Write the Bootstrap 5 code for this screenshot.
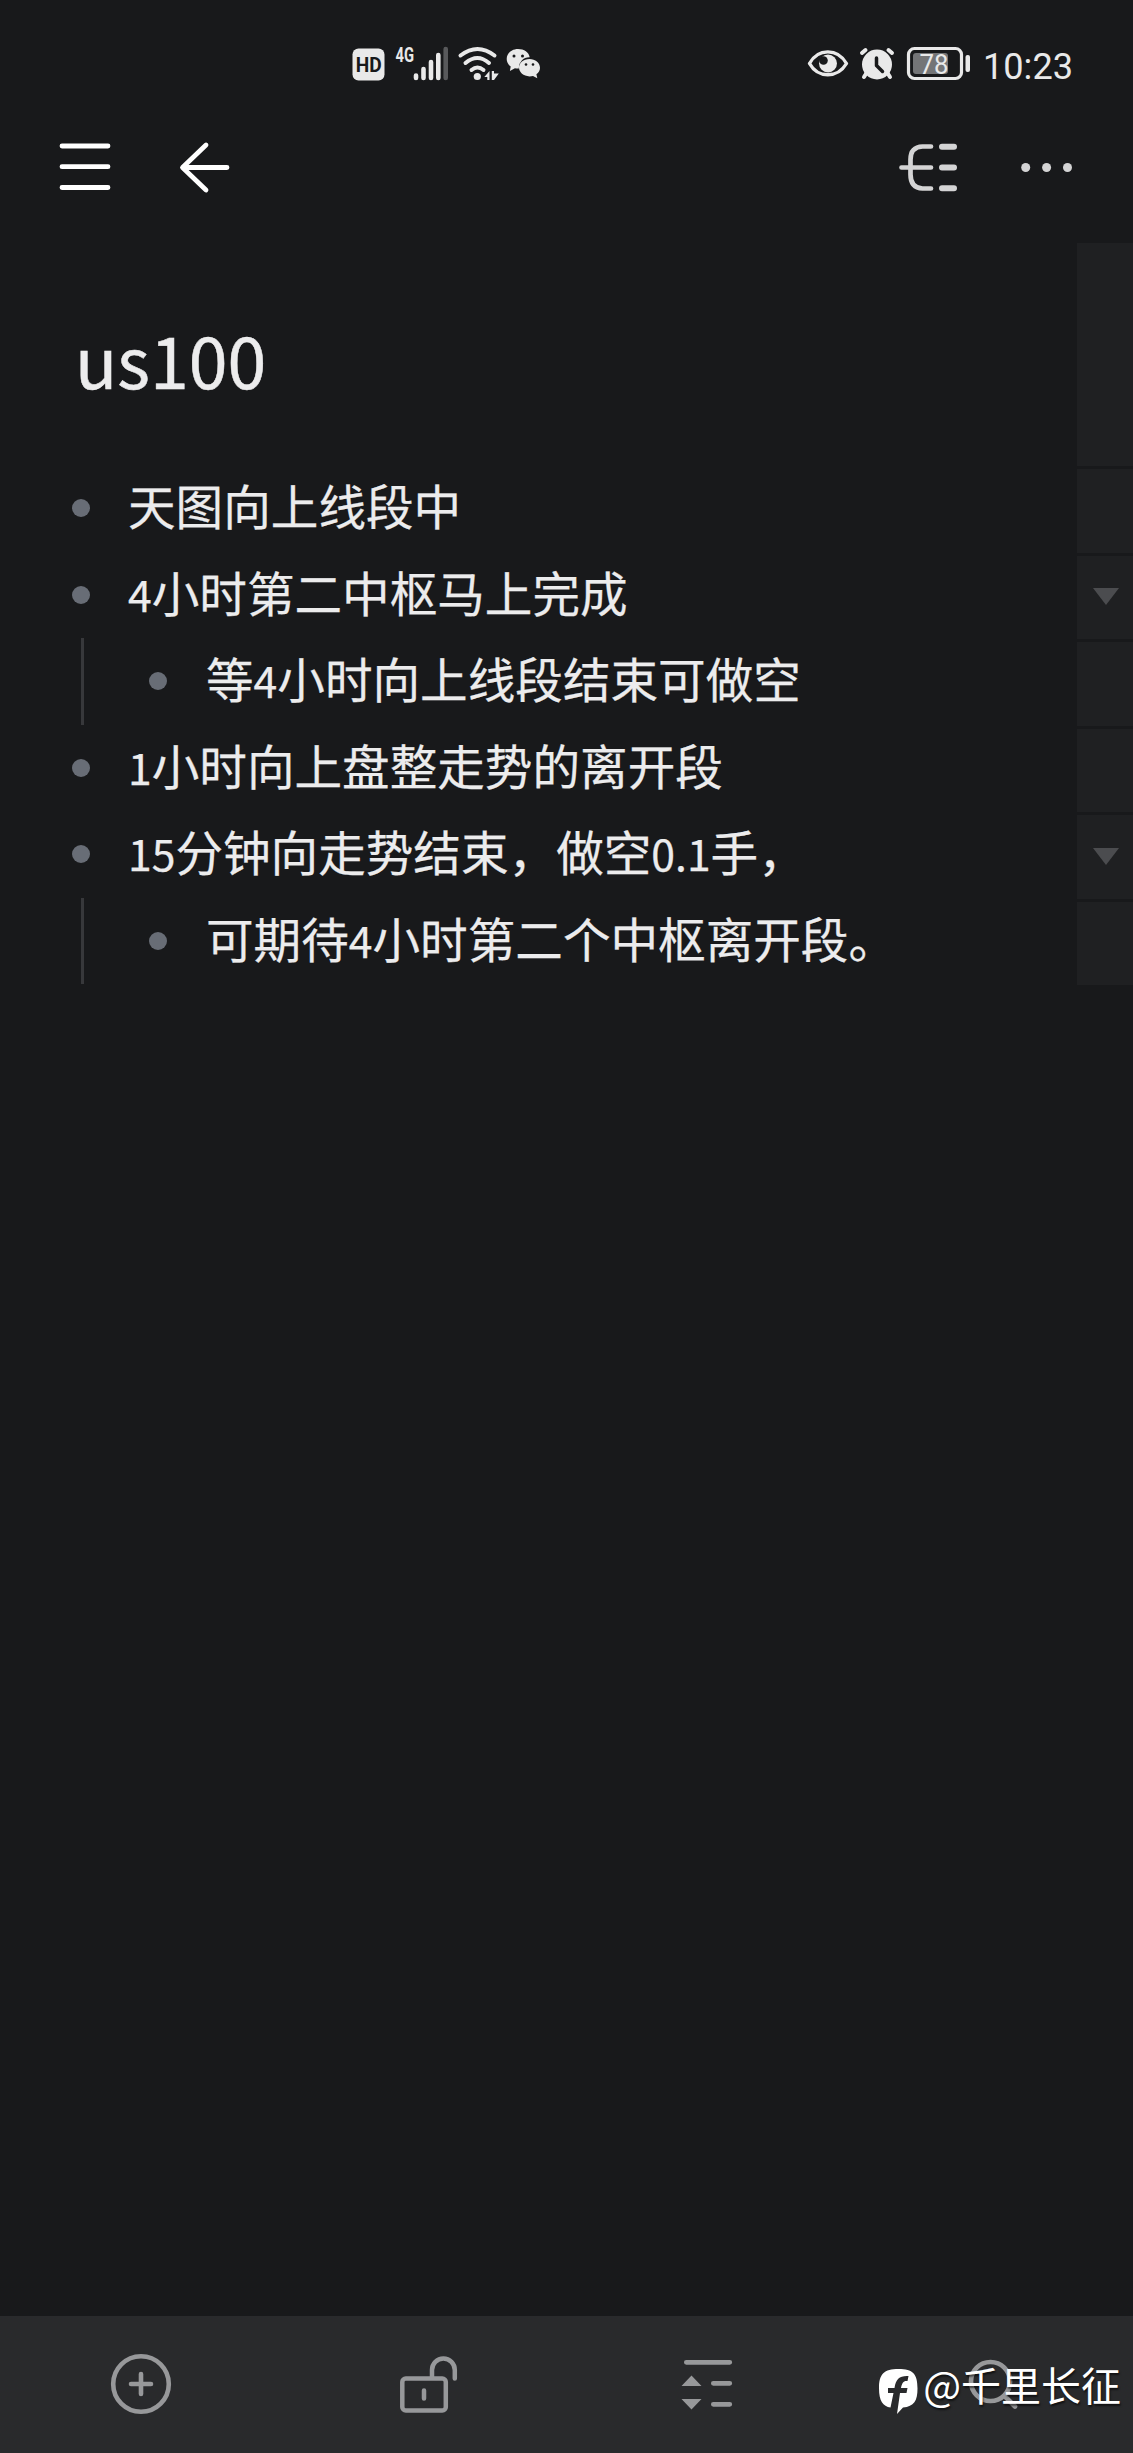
<!DOCTYPE html>
<html lang="zh-CN">
<head>
<meta charset="utf-8">
<meta name="viewport" content="width=device-width, initial-scale=1">
<title>us100</title>
<link href="https://cdn.jsdelivr.net/npm/bootstrap@5.3.0/dist/css/bootstrap.min.css" rel="stylesheet">
<style>
body{background:#18191b;color:#ececed;font-family:"Noto Sans CJK SC","Noto Sans",sans-serif;height:2453px;overflow:hidden}
svg{display:block;flex:none}
.statusbar{height:105px}
.st-left{padding-left:340px;padding-top:30px}
.st-right{padding-left:230px;padding-top:30px}
.topbar{height:138px}
.topbar>svg:first-child{margin-left:40px}
.topbar>svg:last-child{margin-left:610px}
.doc-col{width:1077px}
.doc-title{font-size:69.8px;line-height:100px;font-weight:400;margin:0;padding:66px 0 0 75px;height:222px;-webkit-text-stroke:.5px #ececed}
.outline-row{height:86.5px;font-size:47.6px;line-height:79px;padding-left:71.5px;white-space:nowrap}
.outline-row>span{height:86.5px;-webkit-text-stroke:.25px #ececed}
.outline-row.sub{padding-left:80.5px}
.guide{width:3px;align-self:stretch;background:#37383b;margin-right:65.5px}
.dot{width:18px;height:18px;border-radius:50%;background:#686d76;margin-right:38.5px;flex:none}
.sub .dot{margin-right:39px}
.num{font-size:42.7px}
.side{width:56px}
.side-cell{height:83.5px;margin-bottom:3px;background:#1f2022}
.side-cell svg{margin-left:2px}
.side-cell.tall{height:223px}
.toolbar-bottom{height:137px;background:#292a2c}
.wmark{right:12px;bottom:38px;color:#fff;font-size:40px;line-height:60px;text-shadow:1px 2px 2px #0009}
.wmark svg{margin-top:15px}
</style>
<script src="https://cdn.jsdelivr.net/npm/bootstrap@5.3.0/dist/js/bootstrap.bundle.min.js"></script>
</head>
<body class="d-flex flex-column position-relative">
<header>
<div class="statusbar d-flex">
<div class="st-left">
<svg width="220" height="70" viewBox="0 0 220 70" fill="#e9e9e9">
<rect x="12.500" y="18.500" width="32" height="32" rx="6"/>
<text x="28.700" y="41.500" text-anchor="middle" font-family="Roboto" font-weight="700" font-size="19.500" textLength="26" lengthAdjust="spacingAndGlyphs" fill="#18191b">HD</text>
<text x="55.500" y="31.500" font-family="Roboto" font-weight="700" font-size="20.500" textLength="18.500" lengthAdjust="spacingAndGlyphs">4G</text>
<g stroke="#e9e9e9" stroke-width="4.600" stroke-linecap="round"><path d="M76 45.500v2.500M83.500 39v9M91 32v16M98.300 25v23"/><path stroke="#58595b" d="M105.700 19v29"/></g>
<g fill="none" stroke="#e9e9e9" stroke-width="4" stroke-linecap="round"><path d="M120.500 25.500Q137.500 12.500 154.500 25.500M125.500 33Q137.500 23 149 33M131.500 40Q137.500 35 143.500 40"/></g>
<circle cx="137.300" cy="46.500" r="3.600"/><path d="M149.500 41v9h-2.200v-3h-3zM151.800 41h2.200v2.500h4.800l-4.800 6.500h-2.200z"/>
<path d="M178 19c-6.500 0-11.300 4.500-11.300 10 0 3 1.500 5.800 4 7.500l-.8 4.500 5-2.700q2 .4 4 .3a10.500 10.500 0 0 1 10.800-11.400c-.8-5-5.500-8.200-11.700-8.200z"/>
<path d="M189.500 29c-6 0-10.500 4-10.500 8.600s4.500 8.800 10.500 8.800q2 0 3.500-.4l4.300 2.300-.9-4c2.200-1.600 3.600-4 3.600-6.600 0-4.800-4.800-8.700-10.500-8.700z"/>
<g fill="#18191b"><circle cx="174" cy="26" r="1.500"/><circle cx="182.500" cy="26" r="1.500"/><circle cx="186" cy="34.500" r="1.300"/><circle cx="193" cy="34.500" r="1.300"/></g>
</svg></div>
<div class="st-right">
<svg width="300" height="70" viewBox="0 0 300 70" fill="#e9e9e9">
<path d="M19.500 33.500C28 18 47.500 18 56.500 33.500 47.500 48.500 28 48.500 19.500 33.500z" fill="none" stroke="#e9e9e9" stroke-width="3.400" stroke-linejoin="round"/>
<circle cx="38" cy="33.500" r="9"/><circle cx="33.500" cy="30.500" r="4.300" fill="#18191b"/>
<circle cx="87" cy="34.500" r="15"/><g stroke="#e9e9e9" stroke-width="4" stroke-linecap="round"><path d="M72 23l3.500-3M102 23l-3.500-3M76.500 43l-2.500 4M97.500 43l2.500 4"/></g><path d="M86.500 28v7.500l6 6" fill="none" stroke="#18191b" stroke-width="3.500" stroke-linecap="round" stroke-linejoin="round"/>
<rect x="118.500" y="18.500" width="53" height="30" rx="6" fill="none" stroke="#e9e9e9" stroke-width="3.200"/><rect x="123" y="23" width="35" height="21" rx="3" fill="#747577"/><rect x="175.500" y="25" width="4.500" height="17" rx="2"/>
<text x="144" y="43.500" text-anchor="middle" font-family="Roboto" font-size="27" textLength="29" lengthAdjust="spacingAndGlyphs">78</text>
<text x="193" y="49" font-family="Roboto" font-size="37" textLength="90" lengthAdjust="spacingAndGlyphs">10:23</text>
</svg></div>
</div>
<nav class="topbar d-flex">
<svg width="220" height="115" viewBox="0 0 220 115" fill="none" stroke="#fff" stroke-width="4.800" stroke-linecap="round" stroke-linejoin="round"><path d="M22 41h46M22 61.700h46M22 82.500h46M166 40l-23.500 22.500L166 85M143 62.500h44"/></svg>
<svg width="240" height="115" viewBox="0 0 240 115" fill="none" stroke="#d4d4d5" stroke-width="4.700" stroke-linecap="round"><path d="M61 41.500H52.500Q40.500 42 40.500 54.500v15Q40.500 83 52.500 83.500H61M31.500 62.500H61"/><path stroke-width="6" d="M72 41.800h12M72 62.500h12M72 83.300h12"/><g fill="#d4d4d5" stroke="none"><circle cx="155.700" cy="62.500" r="4.500"/><circle cx="176.600" cy="62.500" r="4.500"/><circle cx="197.500" cy="62.500" r="4.500"/></g></svg>
</nav>
</header>
<main class="d-flex flex-grow-1">
<div class="doc-col">
<h1 class="doc-title">us100</h1>
<div class="outline-row d-flex align-items-center"><i class="dot"></i><span>天图向上线段中</span></div>
<div class="outline-row d-flex align-items-center"><i class="dot"></i><span><span class="num">4</span>小时第二中枢马上完成</span></div>
<div class="outline-row sub d-flex align-items-center"><i class="guide"></i><i class="dot"></i><span>等<span class="num">4</span>小时向上线段结束可做空</span></div>
<div class="outline-row d-flex align-items-center"><i class="dot"></i><span><span class="num">1</span>小时向上盘整走势的离开段</span></div>
<div class="outline-row d-flex align-items-center"><i class="dot"></i><span><span class="num">15</span>分钟向走势结束，做空<span class="num">0.1</span>手，</span></div>
<div class="outline-row sub d-flex align-items-center"><i class="guide"></i><i class="dot"></i><span>可期待<span class="num">4</span>小时第二个中枢离开段。</span></div>
</div>
<aside class="side">
<div class="side-cell tall"></div>
<div class="side-cell"></div>
<div class="side-cell d-flex align-items-center justify-content-center"><svg width="28" height="18"><path d="M1 0h26L14 17z" fill="#4b4c4f"/></svg></div>
<div class="side-cell"></div>
<div class="side-cell"></div>
<div class="side-cell d-flex align-items-center justify-content-center"><svg width="28" height="18"><path d="M1 0h26L14 17z" fill="#4b4c4f"/></svg></div>
<div class="side-cell"></div>
</aside>
</main>
<footer class="toolbar-bottom position-relative">
<div class="d-flex h-100">
<div class="col-3 d-flex"><svg width="283" height="137" viewBox="0 0 283 137" fill="none" stroke="#97989a" stroke-width="4.600" stroke-linecap="round"><circle cx="141" cy="68" r="27.800"/><path d="M131 68h20M141 58v20"/></svg></div>
<div class="col-3 d-flex"><svg width="283" height="137" viewBox="283 0 283 137" fill="none" stroke="#97989a" stroke-width="4.500" stroke-linecap="round"><rect x="402.300" y="62.500" width="43.500" height="32" rx="3.500"/><path d="M432 61v-7a11.400 11.400 0 0 1 22.800 0v8.500M424 74.500v8"/></svg></div>
<div class="col-3 d-flex"><svg width="283" height="137" viewBox="566 0 283 137" fill="#97989a" stroke="#97989a" stroke-width="4.700" stroke-linecap="round"><path d="M685.300 46.300h43.500M712.300 67.300h16.500M712.300 88.300h16.500"/><path stroke="none" d="M690.500 59.500l10 10.500h-20zM680.500 83h20l-10 10.500z"/></svg></div>
<div class="col-3 d-flex"><svg width="283" height="137" viewBox="850 0 283 137" fill="none" stroke="#97989a" stroke-width="4.700" stroke-linecap="round"><circle cx="990.500" cy="65.500" r="19.500"/><path d="M1004.500 80l10.500 10.500"/></svg></div>
</div>
<div class="wmark position-absolute d-flex align-items-start"><svg width="40" height="46" viewBox="0 0 40 46"><path fill="#fff" d="M19.500 0C5 0 0 5 0 19.500 0 32 4 37.500 11.500 38.500L14.500 24H9v-5h6.500C17 10 20.500 6.500 29.500 7l-1 5c-4-.5-5.500 1.500-6.500 7h6.500l-1 5H21l-3 21 6-6.500c11-1 14.500-6.500 14.500-19C38.500 5 34 0 19.500 0z"/></svg><span class="ms-1">@千里长征</span></div>
</footer>
</body>
</html>
